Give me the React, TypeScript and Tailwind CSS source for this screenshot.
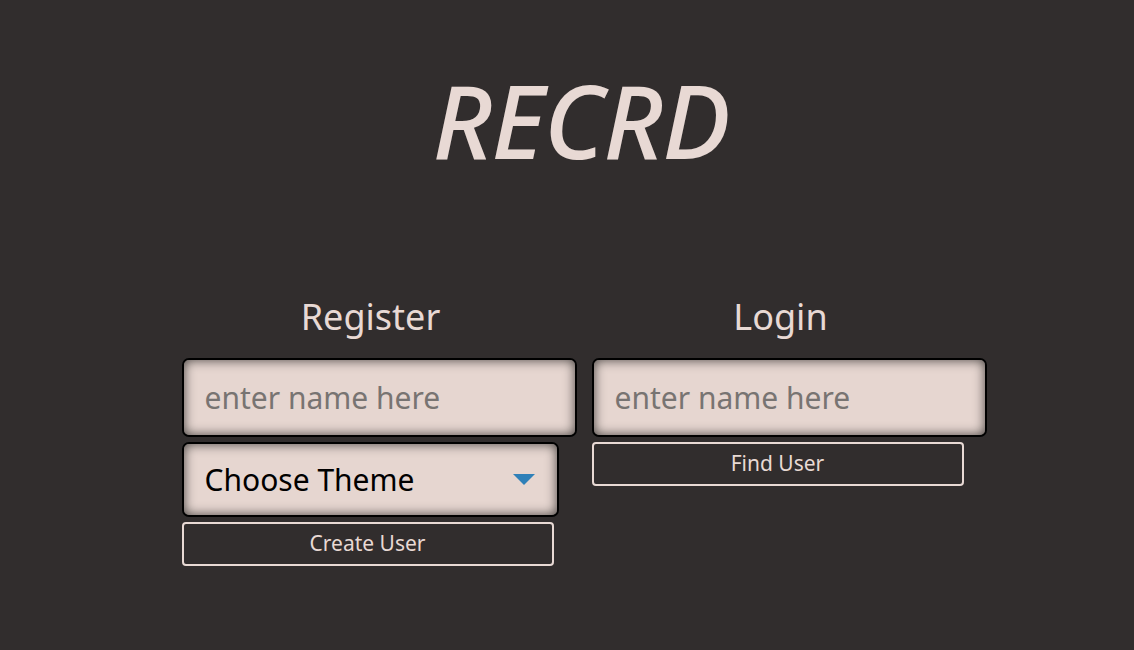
import React from "react";

const font = { fontFamily: '"Noto Sans", "Open Sans", sans-serif' };

function Arrow() {
  return (
    <svg width="22" height="12" viewBox="0 0 22 12" className="shrink-0">
      <polygon points="0,0 22,0 11,11" fill="#2f80b8" />
    </svg>
  );
}

export default function App() {
  return (
    <div
      className="w-[1134px] h-[650px] bg-[#312d2d] text-[#e8d9d4] overflow-hidden flex flex-col items-center"
      style={font}
    >
      <h1 className="mt-[62px] ml-[28px] text-[102px] leading-[116px] italic font-medium tracking-[-1px]">
        RECRD
      </h1>
      <div className="mt-[114px] ml-[34px] flex gap-[15px] items-start">
        <div className="w-[395px] flex flex-col">
          <div className="w-[378px] text-center text-[36px] leading-[50px] mb-[16px]">Register</div>
          <input
            placeholder="enter name here"
            className="w-[395px] h-[79px] bg-[#e6d6d0] border-2 border-black rounded-[7px] px-[21px] text-[30px] text-black placeholder:text-[#787472] shadow-[inset_0_0_12px_rgba(0,0,0,0.7)] outline-none"
          />
          <div className="mt-[5px] w-[377px] h-[75px] bg-[#e6d6d0] border-2 border-black rounded-[7px] pl-[21px] pr-[22px] flex items-center justify-between shadow-[inset_0_0_12px_rgba(0,0,0,0.7)]">
            <span className="text-[30px] text-black">Choose Theme</span>
            <Arrow />
          </div>
          <button className="mt-[5px] w-[372px] h-[44px] border-2 border-[#e8d9d4] rounded-[4px] text-[21px] text-[#e8d9d4] bg-transparent">
            Create User
          </button>
        </div>
        <div className="w-[395px] flex flex-col">
          <div className="w-[378px] text-center text-[36px] leading-[50px] mb-[16px]">Login</div>
          <input
            placeholder="enter name here"
            className="w-[395px] h-[79px] bg-[#e6d6d0] border-2 border-black rounded-[7px] px-[21px] text-[30px] text-black placeholder:text-[#787472] shadow-[inset_0_0_12px_rgba(0,0,0,0.7)] outline-none"
          />
          <button className="mt-[5px] w-[372px] h-[44px] border-2 border-[#e8d9d4] rounded-[4px] text-[21px] text-[#e8d9d4] bg-transparent">
            Find User
          </button>
        </div>
      </div>
    </div>
  );
}
